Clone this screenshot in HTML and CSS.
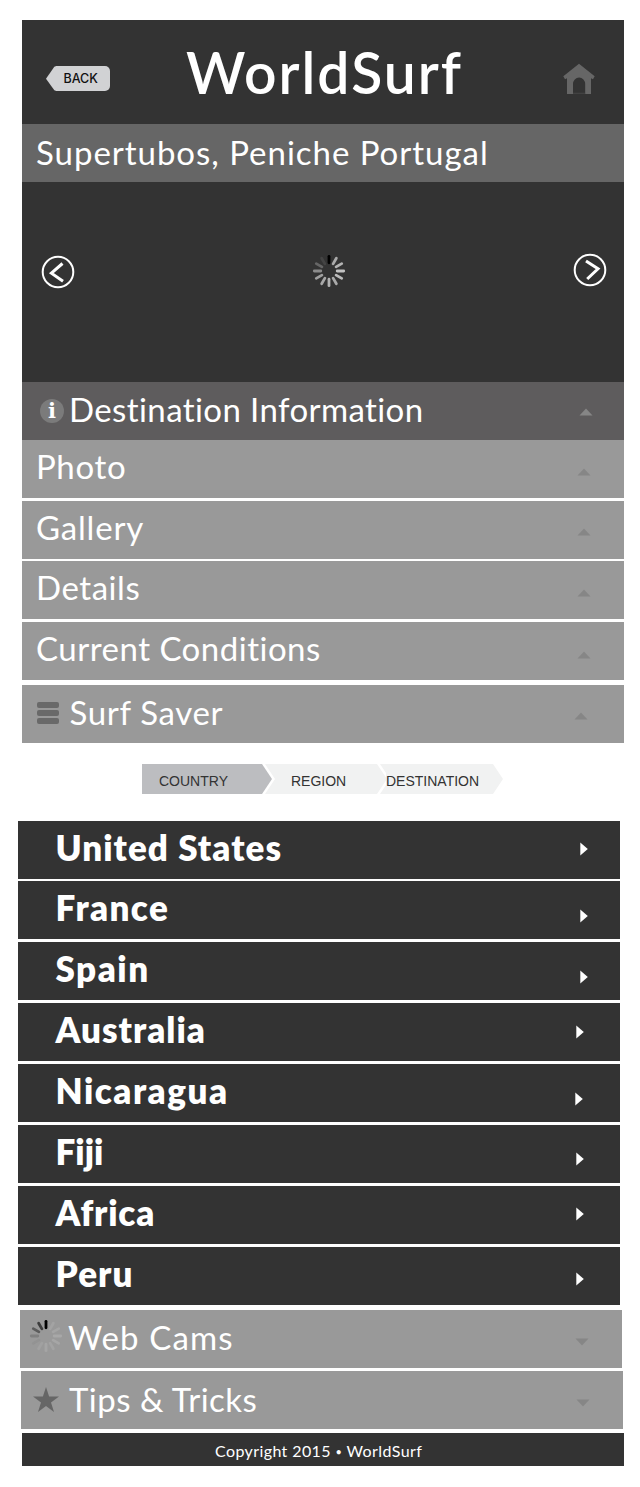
FILE: index.html
```
<!DOCTYPE html>
<html lang="en">
<head>
<meta charset="utf-8">
<title>WorldSurf</title>
<link rel="stylesheet" href="styles.css">
</head>
<body>
<svg class="defs" aria-hidden="true">
  <symbol id="up" viewBox="0 0 14 8"><path d="M7 .5 13.5 7.5H.5z"/></symbol>
  <symbol id="down" viewBox="0 0 14 8"><path d="M.5.5h13L7 7.5z"/></symbol>
  <symbol id="next" viewBox="0 0 8 14"><path d="M.3.5 7.8 7 .3 13.5z"/></symbol>
</svg>
<main class="page">
  <header class="header">
    <a class="back"><span>BACK</span></a>
    <h1 class="brand">WorldSurf</h1>
    <svg class="home" viewBox="0 0 32 31"><path d="M16 .7 31.7 13.2 30 16.2 28 15.2V31h-5.800V21a6.100 6.500 0 0 0-12.200 0V31H4V15.200L2 16.200.3 13.200z"/><path class="step" d="M10 30.300h12.200"/></svg>
  </header>
  <h2 class="row spot"><span class="label">Supertubos, Peniche Portugal</span></h2>
  <section class="viewer">
    <svg class="arrow arrow-prev" viewBox="0 0 34 34"><circle cx="17" cy="17" r="15.300"/><path d="M21.500 8.500 10.400 18.200 22 26.200"/></svg>
    <svg class="spinner" viewBox="-17 -17 34 34">
      <path d="M0-14.700V-8.200" stroke="#000"/>
      <path d="M0-14.700V-8.200" stroke="#aaa" transform="rotate(30)"/>
      <path d="M0-14.700V-8.200" stroke="#b3b3b3" transform="rotate(60)"/>
      <path d="M0-14.700V-8.200" stroke="#c2c2c2" transform="rotate(90)"/>
      <path d="M0-14.700V-8.200" stroke="#bbb" transform="rotate(120)"/>
      <path d="M0-14.700V-8.200" stroke="#aaa" transform="rotate(150)"/>
      <path d="M0-14.700V-8.200" stroke="#b3b3b3" transform="rotate(180)"/>
      <path d="M0-14.700V-8.200" stroke="#a8a8a8" transform="rotate(210)"/>
      <path d="M0-14.700V-8.200" stroke="#a0a0a0" transform="rotate(240)"/>
      <path d="M0-14.700V-8.200" stroke="#8c8c8c" transform="rotate(270)"/>
      <path d="M0-14.700V-8.200" stroke="#666" transform="rotate(300)"/>
      <path d="M0-14.700V-8.200" stroke="#444" transform="rotate(330)"/>
    </svg>
    <svg class="arrow arrow-next" viewBox="0 0 34 34"><circle cx="17" cy="17" r="15.300"/><path d="M13 8 25 15.800 14.200 26"/></svg>
  </section>
  <nav class="menu">
    <a class="row info"><span class="icon badge">i</span><span class="label">Destination Information</span><svg class="caret"><use href="#up"/></svg></a>
    <a class="row photo"><span class="label">Photo</span><svg class="caret"><use href="#up"/></svg></a>
    <a class="row gallery"><span class="label">Gallery</span><svg class="caret"><use href="#up"/></svg></a>
    <a class="row details"><span class="label">Details</span><svg class="caret"><use href="#up"/></svg></a>
    <a class="row conditions"><span class="label">Current Conditions</span><svg class="caret"><use href="#up"/></svg></a>
    <a class="row saver"><svg class="icon bars" viewBox="0 0 22 22"><rect width="22" height="6" rx="2"/><rect y="8" width="22" height="6" rx="2"/><rect y="16" width="22" height="6" rx="2"/></svg><span class="label">Surf Saver</span><svg class="caret"><use href="#up"/></svg></a>
  </nav>
  <ol class="crumbs">
    <li class="crumb current">COUNTRY</li>
    <li class="crumb region">REGION</li>
    <li class="crumb destination">DESTINATION</li>
  </ol>
  <nav class="countries">
    <a class="row us"><span class="label">United States</span><svg class="next"><use href="#next"/></svg></a>
    <a class="row france"><span class="label">France</span><svg class="next"><use href="#next"/></svg></a>
    <a class="row spain"><span class="label">Spain</span><svg class="next"><use href="#next"/></svg></a>
    <a class="row australia"><span class="label">Australia</span><svg class="next"><use href="#next"/></svg></a>
    <a class="row nicaragua"><span class="label">Nicaragua</span><svg class="next"><use href="#next"/></svg></a>
    <a class="row fiji"><span class="label">Fiji</span><svg class="next"><use href="#next"/></svg></a>
    <a class="row africa"><span class="label">Africa</span><svg class="next"><use href="#next"/></svg></a>
    <a class="row peru"><span class="label">Peru</span><svg class="next"><use href="#next"/></svg></a>
  </nav>
  <nav class="extras">
    <a class="row cams"><svg class="icon spinner" viewBox="-17 -17 34 34">
      <path d="M0-14.700V-8.200" stroke="#000"/>
      <path d="M0-14.700V-8.200" stroke="#a3a3a3" transform="rotate(30)"/>
      <path d="M0-14.700V-8.200" stroke="#a5a5a5" transform="rotate(60)"/>
      <path d="M0-14.700V-8.200" stroke="#a8a8a8" transform="rotate(90)"/>
      <path d="M0-14.700V-8.200" stroke="#a6a6a6" transform="rotate(120)"/>
      <path d="M0-14.700V-8.200" stroke="#a3a3a3" transform="rotate(150)"/>
      <path d="M0-14.700V-8.200" stroke="#a5a5a5" transform="rotate(180)"/>
      <path d="M0-14.700V-8.200" stroke="#a1a1a1" transform="rotate(210)"/>
      <path d="M0-14.700V-8.200" stroke="#939393" transform="rotate(240)"/>
      <path d="M0-14.700V-8.200" stroke="#808080" transform="rotate(270)"/>
      <path d="M0-14.700V-8.200" stroke="#5c5c5c" transform="rotate(300)"/>
      <path d="M0-14.700V-8.200" stroke="#3c3c3c" transform="rotate(330)"/>
    </svg><span class="label">Web Cams</span><svg class="caret"><use href="#down"/></svg></a>
    <a class="row tips"><svg class="icon star" viewBox="0 0 26 25"><path d="M13 0 16.100 9.500H26L18 15.400 21 25 13 19.100 5 25 8 15.400 0 9.500H9.900z"/></svg><span class="label">Tips &amp; Tricks</span><svg class="caret"><use href="#down"/></svg></a>
  </nav>
  <footer class="footer">Copyright 2015 <span class="dot">•</span> WorldSurf</footer>
</main>
</body>
</html>
```
FILE: styles.css
```
* { box-sizing: border-box; }
body { margin: 0; background: #fff; color: #fff; font-family: Lato, "Open Sans", sans-serif; }
h1, h2, ol { margin: 0; padding: 0; font-weight: 400; list-style: none; }
svg { display: block; flex: none; }
.defs { display: none; }
.page { padding: 20px 16px 0 22px; }

/* Header */
.header { height: 104px; display: flex; background: #333; }
.back {
  width: 64px; height: 25px; margin: 46px 0 0 24px; padding-left: 17.500px;
  background: #d1d2d4; color: #111; border-radius: 0 5px 5px 0;
  clip-path: polygon(0 51%, 13% 3%, 16% 0, 100% 0, 100% 100%, 16% 100%, 13% 97%);
  font: 500 12.500px/26px Inter, sans-serif;
}
.brand { margin-left: 76px; font-size: 57px; font-weight: 600; line-height: 105px; letter-spacing: 1.960px; white-space: nowrap; }
.home { width: 32px; height: 31px; margin: 43px 29px 0 auto; fill: #666; }
.step { fill: none; stroke: #555; stroke-width: .6; }

/* Shared bars */
.row { display: flex; align-items: flex-start; height: 58px; background: #999; }
.label { padding-left: 14px; font-size: 33px; line-height: 53px; white-space: nowrap; }
.icon + .label { padding-left: 1px; }
.spot { background: #666; }
.spot .label { padding-top: 2px; letter-spacing: .97px; }

/* Viewer */
.viewer { height: 200px; display: flex; background: #333; }
.arrow { width: 34px; height: 34px; fill: none; stroke: #fff; stroke-width: 2; }
.arrow path { stroke-width: 3; }
.arrow-prev { margin: 73px 0 0 19px; }
.arrow-next { margin: 71px 17px 0 auto; }
.spinner { width: 34px; height: 34px; stroke-width: 2.8; stroke-linecap: round; }
.viewer .spinner { margin: 72px 0 0 237px; }

/* Menu */
.caret { width: 14px; height: 8px; margin: 28px 33.5px 0 auto; fill: #868686; }
.info { background: #5e5c5d; }
.info .caret { margin: 25.5px 30.7px 0 auto; }
.info .label { padding-top: 1px; letter-spacing: .4px; }
.badge {
  width: 24px; height: 24px; margin: 17px 4px 0 18px; border-radius: 50%;
  background: #7b7b7b; text-align: center; font: bold 21px/23px "DejaVu Serif", serif;
}
.photo .label { letter-spacing: .65px; }
.gallery { margin-top: 3px; }
.gallery .label { letter-spacing: .8px; }
.gallery .caret { margin-top: 27px; }
.details { margin-top: 2px; }
.details .label { letter-spacing: .55px; }
.details .caret { margin-top: 28px; }
.conditions { margin-top: 3px; }
.conditions .label { letter-spacing: .5px; }
.conditions .caret { margin-top: 28.500px; }
.saver { margin-top: 5px; }
.saver .label { padding-top: 1px; letter-spacing: .66px; }
.saver .caret { margin: 27.300px 35.700px 0 auto; }
.bars { width: 22px; height: 22px; margin: 17px 9.500px 0 15px; fill: #696969; }

/* Breadcrumb */
.crumbs { display: flex; margin: 21px 0 0 120px; color: #333; font: 14px/34px "Liberation Sans", Arial, sans-serif; }
.crumb { height: 30px; background: #f1f2f2; white-space: nowrap; }
.current { width: 130px; padding-left: 17px; background: #bcbdc0; clip-path: polygon(0 0, 120px 0, 100% 50%, 120px 100%, 0 100%); }
.region { width: 122px; margin-left: -7px; padding-left: 26px; clip-path: polygon(0 0, 112px 0, 100% 50%, 112px 100%, 0 100%, 10px 50%); }
.destination { width: 123px; margin-left: -7px; padding-left: 6px; clip-path: polygon(0 0, 113px 0, 100% 50%, 113px 100%, 0 100%, 6px 70%, 6px 30%); }

/* Countries */
.countries { display: flex; flex-direction: column; gap: 2.860px; width: 602.400px; margin: 26.600px 0 0 -4px; }
.countries .row { background: #333; }
.countries .label { padding-left: 37.500px; font-size: 35px; font-weight: 800; line-height: 52px; }
.next { width: 8px; height: 14px; margin: 28px 32.500px 0 auto; fill: #fff; }
.us .label { letter-spacing: 1.060px; }
.us .next { margin-top: 21.500px; }
.france .label { letter-spacing: 1.400px; }
.spain .label { letter-spacing: 1.500px; }
.australia .label { letter-spacing: 1px; }
.australia .next { margin: 21.500px 36px 0 auto; }
.nicaragua .label { letter-spacing: 1.500px; }
.nicaragua .next { margin-right: 37px; }
.fiji .label { letter-spacing: 0; }
.fiji .next { margin: 27px 36px 0 auto; }
.africa .label { letter-spacing: .8px; }
.africa .next { margin: 21.500px 36px 0 auto; }
.peru .label { letter-spacing: 1.100px; }
.peru .next { margin: 25px 36px 0 auto; }

/* Extras */
.extras { padding-top: 5.400px; }
.cams { width: 602.400px; margin-left: -2px; }
.icon.spinner + .label { padding: 1px 0 0; letter-spacing: 1.150px; }
.cams .spinner { margin: 9px 5px 0 9px; }
.tips { width: 602.400px; margin: 3px 0 0 -1px; }
.icon.star + .label { padding: 2px 0 0; letter-spacing: .48px; }
.star { width: 26px; height: 25px; margin: 16px 10px 0 12px; fill: #666; }

.footer { height: 33px; margin-top: 4px; padding-left: 193px; background: #333; font-size: 16px; line-height: 36px; letter-spacing: .4px; }
.dot { font-size: 11px; vertical-align: 1px; }
```
